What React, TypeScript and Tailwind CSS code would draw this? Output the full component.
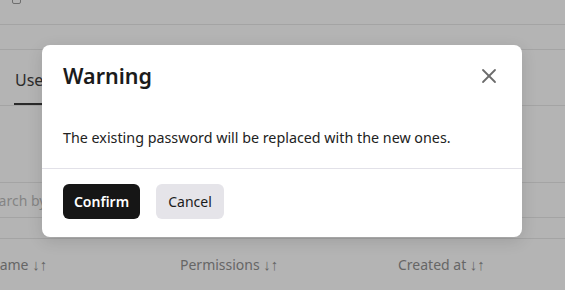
import { X } from "lucide-react";

const Arrows = () => (
  <span className="font-['Liberation_Sans',sans-serif] text-[15px]">↓↑</span>
);

const Page = () => {
  return (
    <div className="flex flex-col w-full">
      <div className="h-[25px] border-b border-[#a4a4a4]">
        <div className="ml-[12px] -mt-[9px] w-[9px] h-[13px] rounded-[2px] border border-[#6e6e6e]" />
      </div>
      <div className="h-[25px] border-b border-[#a4a4a4]" />
      <div className="h-[56px] flex items-end border-b border-[#a4a4a4]">
        <div className="ml-[14px] pb-[11px] border-b-2 border-[#2a2a2a] text-[16px] text-[#2c2c2c] pr-[20px]">
          <span className="ml-px">Users</span>
        </div>
      </div>
      <div className="mt-[76px] h-[36px] border-y border-[#a4a4a4] flex items-center">
        <span className="-ml-[17px] text-[14px] text-[#848484]">Search by name</span>
      </div>
      <div className="h-[21px] border-b border-[#a4a4a4]" />
      <div className="flex items-center h-[52px] text-[14px] text-[#666666]">
        <span className="-ml-[11px] w-[191px]">
          Name <Arrows />
        </span>
        <span className="w-[218px]">
          Permissions <Arrows />
        </span>
        <span>
          Created at <Arrows />
        </span>
      </div>
    </div>
  );
};

const WarningModal = () => {
  return (
    <div className="absolute left-[42px] top-[45px] w-[480px] h-[192px] bg-white rounded-[8px] shadow-[0_4px_16px_rgba(0,0,0,0.12)] flex flex-col">
      <div className="flex items-start justify-between pl-[21px] pr-[21px] pt-[16px] h-[62px]">
        <h2 className="text-[21.5px] font-semibold text-[#1b1b1b] leading-[30px]">Warning</h2>
        <button className="text-[#6b6b6b] mt-[3px]">
          <X size={24} strokeWidth={1.8} />
        </button>
      </div>
      <div className="px-[21px] pt-[20px] h-[62px] border-b border-[#e2e1e8] text-[14.3px] leading-[21px] text-[#222222]">
        The existing password will be replaced with the new ones.
      </div>
      <div className="flex gap-[16px] px-[21px] pt-[15px]">
        <button className="h-[35px] w-[77px] rounded-[6px] bg-[#161616] text-white text-[14px] font-semibold">
          Confirm
        </button>
        <button className="h-[35px] w-[68px] rounded-[6px] bg-[#e5e4e9] text-[#1b1b1b] text-[14px] font-normal">
          Cancel
        </button>
      </div>
    </div>
  );
};

export default function App() {
  return (
    <div className="relative w-[565px] h-[290px] overflow-hidden bg-[#b4b4b4] font-['Noto_Sans',sans-serif]">
      <Page />
      <WarningModal />
    </div>
  );
}
